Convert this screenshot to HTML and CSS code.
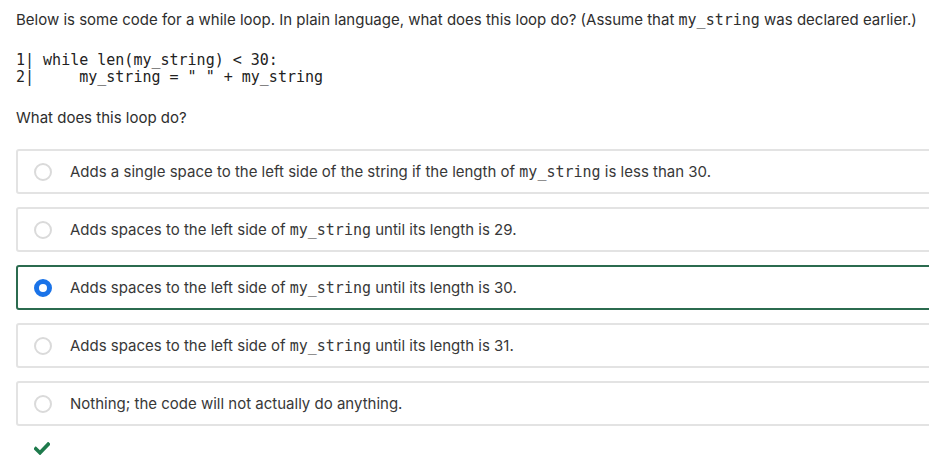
FILE: index.html
```html
<!DOCTYPE html>
<html>
<head>
<meta charset="utf-8">
<link rel="stylesheet" href="styles.css">
</head>
<body>
<div class="page">
  <p class="prompt">Below is some code for a while loop. In plain language, what does this loop do? (Assume that <code>my_string</code> was declared earlier.)</p>
  <pre class="code">1| while len(my_string) &lt; 30:
2|     my_string = " " + my_string</pre>
  <p class="question">What does this loop do?</p>
  <div class="options">
    <div class="option"><span class="radio"></span><span class="label">Adds a single space to the left side of the string if the length of <code>my_string</code> is less than 30.</span></div>
    <div class="option"><span class="radio"></span><span class="label">Adds spaces to the left side of <code>my_string</code> until its length is 29.</span></div>
    <div class="option selected"><span class="radio checked"></span><span class="label">Adds spaces to the left side of <code>my_string</code> until its length is 30.</span></div>
    <div class="option"><span class="radio"></span><span class="label">Adds spaces to the left side of <code>my_string</code> until its length is 31.</span></div>
    <div class="option"><span class="radio"></span><span class="label">Nothing; the code will not actually do anything.</span></div>
  </div>
  <div class="result">
    <svg width="16" height="13" viewBox="0 0 16 13"><path d="M1.8 6.8 L6 10.8 L14.2 2.2" fill="none" stroke="#1e7a4c" stroke-width="3.6" stroke-linecap="square" stroke-linejoin="miter"/></svg>
  </div>
</div>
</body>
</html>
```
FILE: styles.css
```css
html, body {
  margin: 0;
  padding: 0;
  background: #fff;
  overflow: hidden;
}
.page {
  padding: 10px 0 0 16px;
  font-family: Inter, "Liberation Sans", sans-serif;
  font-size: 15px;
  color: #2e2e2e;
}
code, .code {
  font-family: "DejaVu Sans Mono", monospace;
}
.prompt code {
  font-size: 15px;
}
.prompt {
  margin: 0;
  line-height: 20px;
}
.code {
  margin: 22px 0 0 0;
  font-size: 15px;
  line-height: 17px;
  color: #222;
}
.question {
  margin: 22px 0 0 0;
  line-height: 20px;
}
.options {
  margin-top: 21px;
  display: flex;
  flex-direction: column;
  gap: 13px;
  margin-right: -20px;
}
.option {
  height: 41px;
  border: 2px solid #e3e3e3;
  border-radius: 3px;
  display: flex;
  align-items: center;
  padding-left: 16px;
}
.option.selected {
  border-color: #2b6b4f;
}
.radio {
  width: 18px;
  height: 18px;
  border: 2px solid #dadada;
  border-radius: 50%;
  box-sizing: border-box;
  flex: none;
}
.radio.checked {
  border: 5.5px solid #1a73e8;
  background: #fff;
}
.label {
  margin-left: 18px;
  color: #383838;
}
.label code {
  font-size: 15px;
}
.result {
  padding: 14px 0 0 18px;
}
```
